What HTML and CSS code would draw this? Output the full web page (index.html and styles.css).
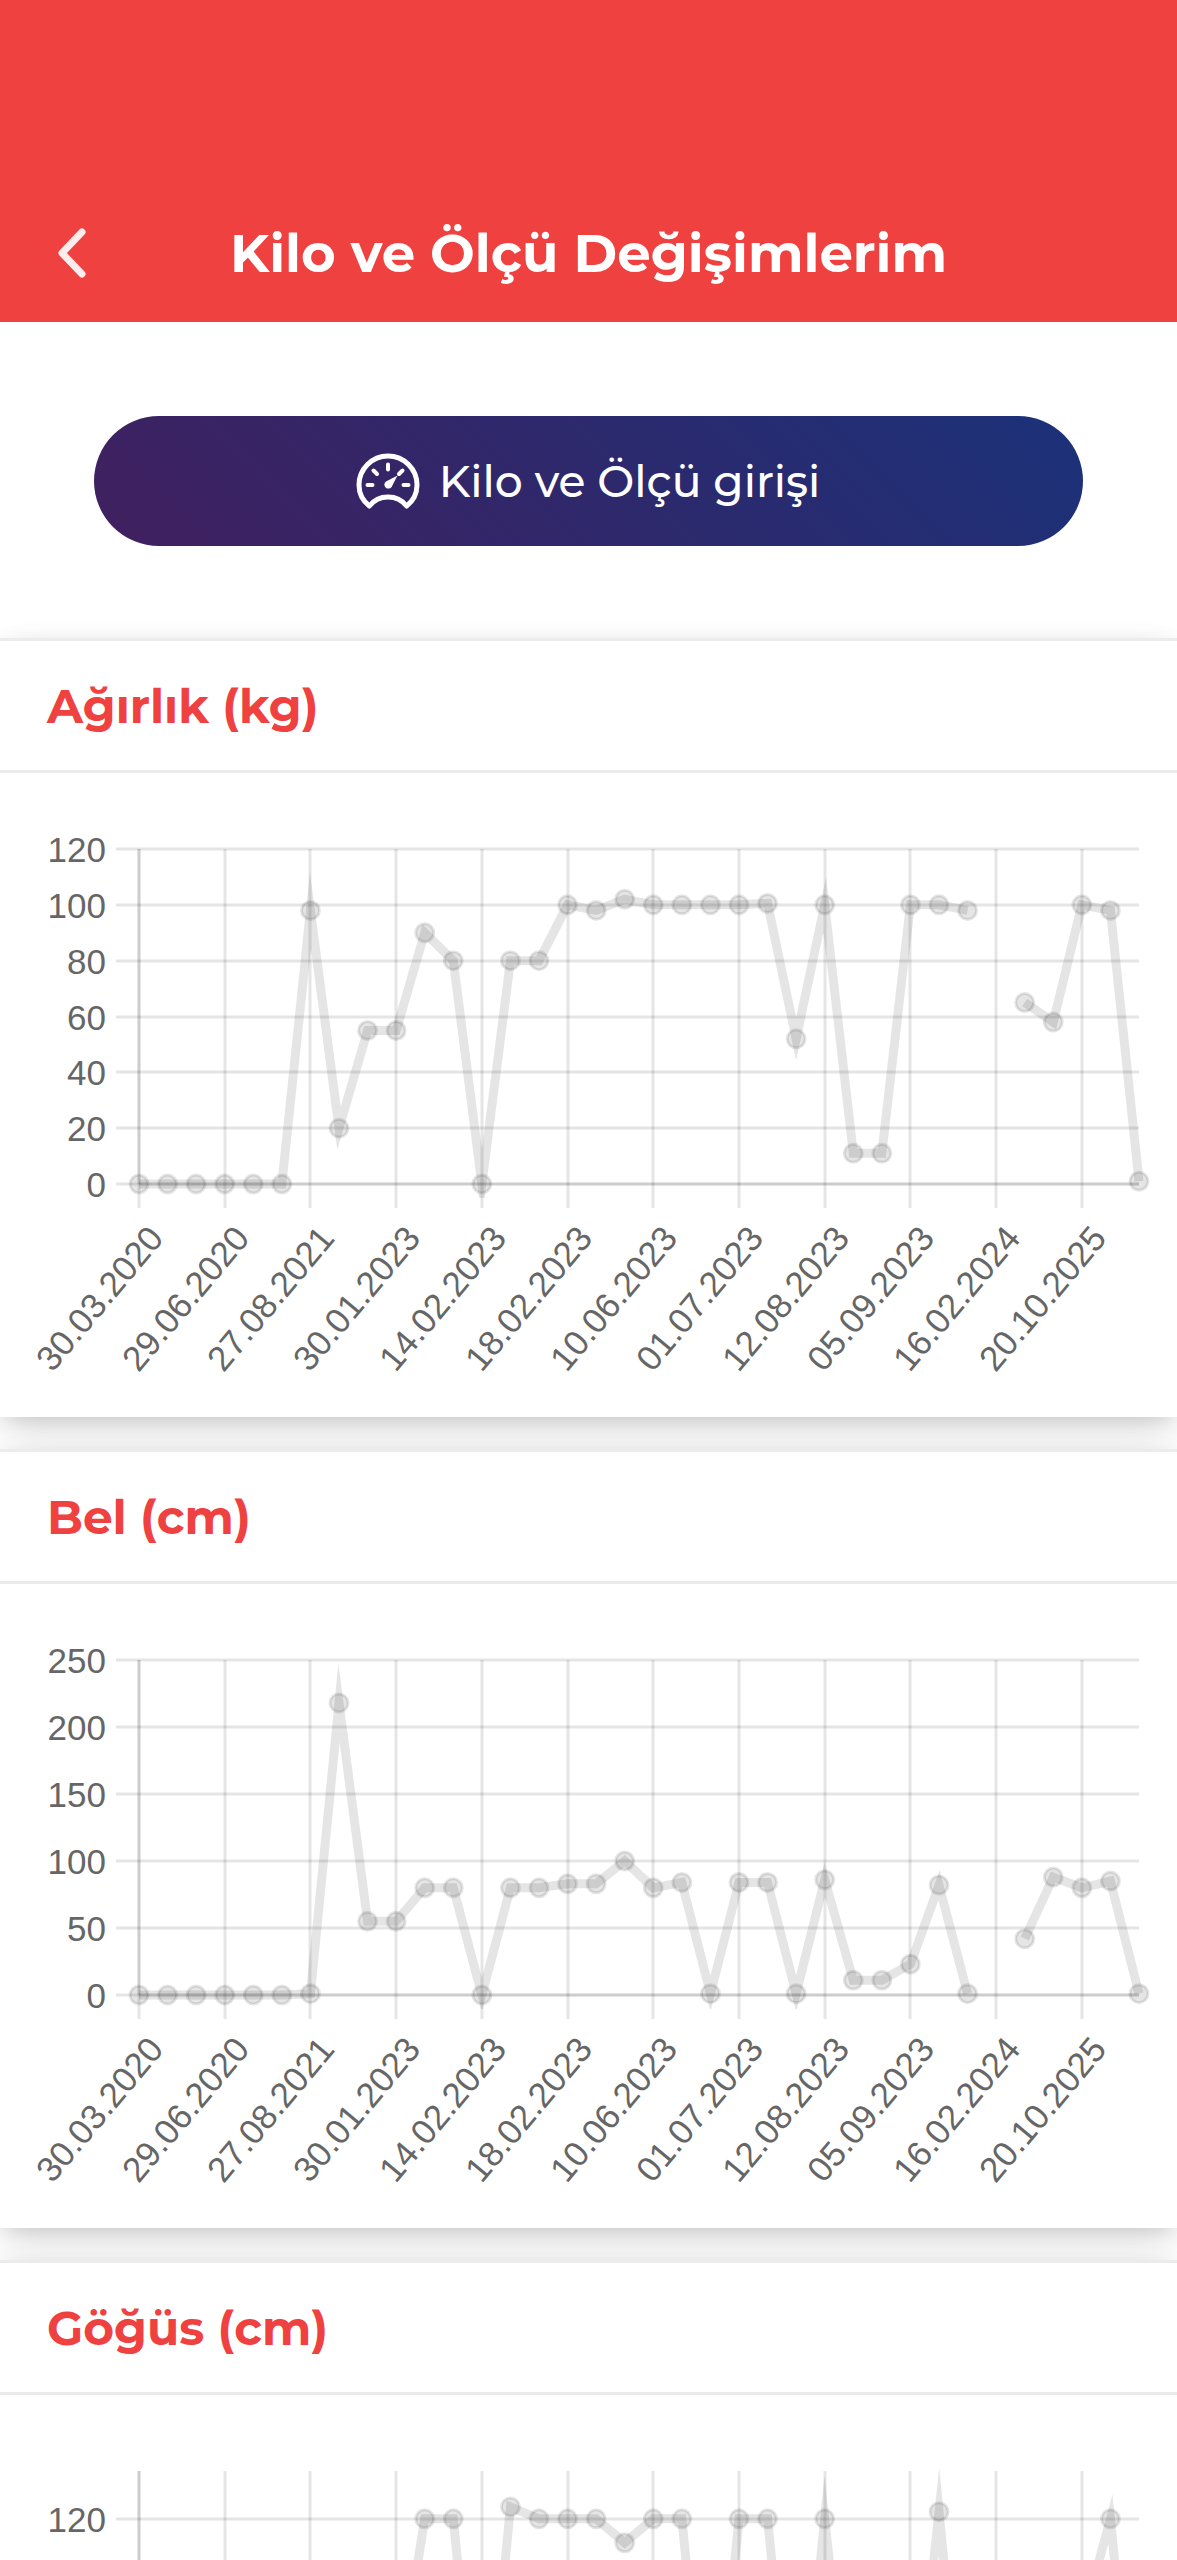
FILE: index.html
```
<!DOCTYPE html>
<html lang="tr">
<head>
    <meta charset="utf-8">
    <meta name="viewport" content="width=device-width, initial-scale=1">
    <title>Kilo ve Ölçü Değişimlerim</title>
    <link rel="stylesheet" href="styles.css">
</head>
<body>
    <header class="header">
        <button class="back-button" type="button" aria-label="Geri">
            <svg viewBox="0 0 28 50" aria-hidden="true">
                <path d="M24 4 4 25l20 21" />
            </svg>
        </button>
        <h1>Kilo ve Ölçü Değişimlerim</h1>
    </header>

    <main class="content">
        <div class="actions">
            <button class="entry-button" type="button">
                <svg class="gauge-icon" viewBox="0 0 62 54" aria-hidden="true">
                    <path class="gauge-line" d="M12.4 52C6 47 2 39.5 2 31a29 29 0 0 1 58 0c0 8.500-4 16-10.400 21C45 46 38.500 43 31 43s-14 3-18.600 9z" />
                    <path class="gauge-tick" d="M10.500 31h5M46.500 31h5M31 10.500v5M16.500 16.500l3.500 3.500M45.500 16.500l-3.500 3.500" />
                    <path class="gauge-needle" d="M40.500 21.500 34.600 33a4 4 0 1 1-5.600-5.600z" />
                </svg>
                <span>Kilo ve Ölçü girişi</span>
            </button>
        </div>

        <section class="card">
            <h2 class="card-header">Ağırlık (kg)</h2>
            <svg class="chart" id="weight-chart" viewBox="0 0 1177 644" role="img" aria-label="Ağırlık (kg)"></svg>
        </section>

        <section class="card">
            <h2 class="card-header">Bel (cm)</h2>
            <svg class="chart" id="waist-chart" viewBox="0 0 1177 644" role="img" aria-label="Bel (cm)"></svg>
        </section>

        <section class="card">
            <h2 class="card-header">Göğüs (cm)</h2>
            <svg class="chart" id="chest-chart" viewBox="0 0 1177 644" role="img" aria-label="Göğüs (cm)"></svg>
        </section>
    </main>

    <script src="charts.js"></script>
</body>
</html>
```
FILE: styles.css
```
* {
    box-sizing: border-box;
}

body {
    margin: 0;
    height: 100vh;
    display: flex;
    flex-direction: column;
    background-color: #fff;
    font-family: Montserrat, Inter, sans-serif;
}

.header {
    flex-shrink: 0;
    display: grid;
    grid-template-columns: 144px 1fr 144px;
    align-items: center;
    min-height: 322px;
    padding-top: 184px;
    background-color: #f04141;
    color: #fff;
}

.header h1 {
    margin: 0;
    font-size: 53px;
    font-weight: 700;
    line-height: 72px;
    text-align: center;
}

.back-button {
    display: flex;
    align-items: center;
    justify-content: center;
    height: 96px;
    padding: 0;
    border: none;
    background: none;
    cursor: pointer;
}

.back-button svg {
    width: 28px;
    height: 50px;
    fill: none;
    stroke: #fff;
    stroke-width: 7;
    stroke-linecap: round;
    stroke-linejoin: round;
    opacity: 0.9;
}

.content {
    flex: 1;
    min-height: 0;
    overflow-x: hidden;
    overflow-y: auto;
    scrollbar-width: none;
}

.actions {
    padding: 94px 94px 92px;
}

.entry-button {
    display: flex;
    align-items: center;
    justify-content: center;
    gap: 20px;
    width: 100%;
    height: 130px;
    border: none;
    border-radius: 65px;
    background: linear-gradient(45deg, #41205f, #1b3179);
    color: #fff;
    font-family: inherit;
    font-size: 44px;
    font-weight: 500;
    cursor: pointer;
}

.gauge-icon {
    width: 62px;
    height: 54px;
    overflow: visible;
    fill: none;
    stroke: #fff;
    stroke-linecap: round;
    stroke-linejoin: round;
}

.gauge-line {
    stroke-width: 5;
}

.gauge-tick {
    stroke-width: 4;
}

.gauge-needle {
    fill: #fff;
    stroke: none;
}

.card {
    margin-bottom: 32px;
    border-top: 3px solid #ececec;
    background-color: #fff;
    box-shadow: 0 24px 48px rgba(0, 0, 0, 0.08), 0 6px 24px -6px rgba(0, 0, 0, 0.22);
}

.card-header {
    margin: 0;
    padding: 34px 47px 32px;
    border-bottom: 3px solid #ebebeb;
    color: #f04141;
    font-size: 47px;
    font-weight: 700;
    line-height: 63px;
}

/* Charts */
.chart {
    display: block;
    width: 100%;
    font-family: "Helvetica Neue", Helvetica, "Liberation Sans", Arial, sans-serif;
    font-size: 35px;
}

.chart text {
    fill: #666;
    text-anchor: end;
}

.grid-line {
    stroke: rgba(0, 0, 0, 0.1);
    stroke-width: 3;
}

.data-line {
    fill: none;
    stroke: rgba(0, 0, 0, 0.1);
    stroke-width: 9;
    stroke-miterlimit: 10;
}

.data-point {
    fill: rgba(0, 0, 0, 0.1);
    stroke: rgba(0, 0, 0, 0.1);
    stroke-width: 3;
}
```
FILE: charts.js
```
const dates = [
    '30.03.2020', '29.06.2020', '27.08.2021', '30.01.2023', '14.02.2023', '18.02.2023',
    '10.06.2023', '01.07.2023', '12.08.2023', '05.09.2023', '16.02.2024', '20.10.2025'
];

const area = { left: 139, right: 1139, top: 76, bottom: 411 };
const labelEvery = 3;

function element(parent, name, attributes, text) {
    const el = document.createElementNS('http://www.w3.org/2000/svg', name);
    Object.keys(attributes).forEach(key => el.setAttribute(key, attributes[key]));
    if (text !== undefined) el.textContent = text;
    parent.appendChild(el);
    return el;
}

function gridLine(svg, x1, y1, x2, y2) {
    element(svg, 'line', { class: 'grid-line', x1, y1, x2, y2 });
}

function drawChart(id, max, step, values) {
    const svg = document.getElementById(id);
    const x = i => area.left + i * (area.right - area.left) / (values.length - 1);
    const y = v => area.bottom - v * (area.bottom - area.top) / max;

    for (let v = 0; v <= max; v += step) {
        const row = Math.round(y(v));
        gridLine(svg, area.left - 23, row, area.right, row);
        element(svg, 'text', { x: area.left - 33, y: row + 13 }, v);
    }

    dates.forEach((date, n) => {
        const column = Math.round(x(n * labelEvery));
        gridLine(svg, column, area.top, column, area.bottom + 24);
        element(svg, 'text', {
            transform: `translate(${column + 26} ${area.bottom + 55}) rotate(-50)`
        }, date);
    });

    // axis borders
    gridLine(svg, area.left, area.top, area.left, area.bottom);
    gridLine(svg, area.left, area.bottom, area.right, area.bottom);

    const clip = element(svg, 'clipPath', { id: id + '-clip' });
    element(clip, 'rect', {
        x: area.left - 14,
        y: area.top - 14,
        width: area.right - area.left + 28,
        height: area.bottom - area.top + 28
    });

    // a missing value breaks the line
    let path = '';
    let penDown = false;
    values.forEach((v, i) => {
        if (v === null) {
            penDown = false;
            return;
        }
        path += `${penDown ? 'L' : 'M'}${x(i)} ${y(v)}`;
        penDown = true;
    });
    element(svg, 'path', { class: 'data-line', d: path, 'clip-path': `url(#${id}-clip)` });

    values.forEach((v, i) => {
        if (v !== null) element(svg, 'circle', { class: 'data-point', cx: x(i), cy: y(v), r: 9 });
    });
}

drawChart('weight-chart', 120, 20, [
    0, 0, 0, 0, 0, 0, 98, 20, 55, 55, 90, 80, 0, 80, 80, 100, 98, 102,
    100, 100, 100, 100, 100.5, 52, 100, 11, 11, 100, 100, 98, null, 65, 58, 100, 98, 1
]);

drawChart('waist-chart', 250, 50, [
    0, 0, 0, 0, 0, 0, 1, 218, 55, 55, 80, 80, 0, 80, 80, 83, 83, 100,
    80, 84, 1, 84, 84, 1, 86, 11, 11, 23, 82, 1, null, 42, 88, 80, 85, 1
]);

drawChart('chest-chart', 140, 40, [
    0, 0, 0, 0, 0, 0, 1, 90, 45, 45, 120, 120, 0, 125, 120, 120, 120, 110,
    120, 120, 1, 120, 120, 1, 120, 11, 11, 11, 123, 1, null, 42, 90, 76, 120, 1
]);
```
